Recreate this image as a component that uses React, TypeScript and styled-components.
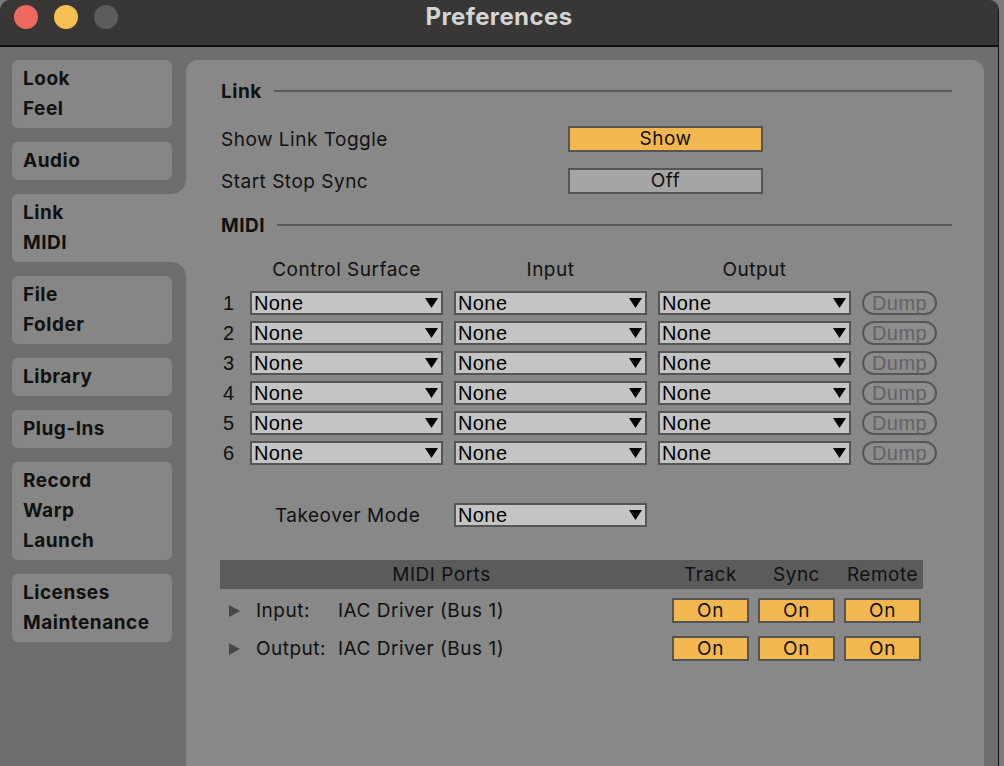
import React from 'react';
import styled, { createGlobalStyle, css } from 'styled-components';

const Global = createGlobalStyle`
  html, body { margin: 0; padding: 0; background: #7a7a7a; }
  body {
    width: 1004px; height: 766px; overflow: hidden;
    font-family: Inter, "Noto Sans", sans-serif;
    color: #111;
  }
  * { box-sizing: border-box; }
`;

const PANEL = '#888888';
const SIDEBAR = '#6e6e6e';
const ORANGE = '#f3b74f';
const BORDER = '#555555';

const uiText = css`
  font-family: Inter, "Noto Sans", sans-serif;
  font-size: 19px;
  letter-spacing: 0.5px;
`;

const monoText = css`
  font-family: "Liberation Sans", Arial, sans-serif;
  font-size: 20px;
  letter-spacing: 0.4px;
`;

const Screen = styled.div`
  display: flex;
  width: 1004px;
  height: 766px;
`;

const Window = styled.div`
  width: 999px;
  display: flex;
  flex-direction: column;
  border-right: 1px solid #111;
  border-radius: 10px 10px 0 0;
  overflow: hidden;
  background: ${SIDEBAR};
`;

const BehindStrip = styled.div`
  flex: 1;
  background: #7b7b7b;
`;

const TitleBar = styled.div`
  height: 47px;
  padding-top: 5px;
  display: grid;
  grid-template-columns: 1fr auto 1fr;
  align-items: start;
  background: #383735;
  border-bottom: 2px solid #111;
`;

const Lights = styled.div`
  display: flex;
  gap: 16px;
  padding-left: 14px;
`;

const Light = styled.span<{ $color: string }>`
  width: 24px;
  height: 24px;
  border-radius: 50%;
  background: ${(p) => p.$color};
`;

const Title = styled.div`
  font-weight: 700;
  font-size: 24px;
  letter-spacing: 0.4px;
  line-height: 24px;
  color: #d4d4d4;
`;

const Body = styled.div`
  flex: 1;
  display: flex;
  padding-top: 13px;
`;

const Sidebar = styled.nav`
  width: 186px;
  flex-shrink: 0;
  display: flex;
  flex-direction: column;
  align-items: flex-start;
  gap: 14px;
  padding-left: 12px;
`;

const NavItem = styled.div<{ $selected?: boolean }>`
  position: relative;
  width: 160px;
  padding: 4px 11px;
  border-radius: 6px;
  background: #868686;
  ${uiText};
  font-weight: 700;
  line-height: 30px;
  color: #111;
  ${(p) =>
    p.$selected &&
    css`
      width: 174px;
      background: ${PANEL};
      border-radius: 6px 0 0 6px;
      &::before,
      &::after {
        content: '';
        position: absolute;
        right: 0;
        width: 14px;
        height: 14px;
      }
      &::before {
        top: -14px;
        background: radial-gradient(circle at 0 0, transparent 13.5px, ${PANEL} 14px);
      }
      &::after {
        bottom: -14px;
        background: radial-gradient(circle at 0 100%, transparent 13.5px, ${PANEL} 14px);
      }
    `}
`;

const NavLine = styled.div``;

const Panel = styled.main`
  flex: 1;
  margin-right: 14px;
  background: ${PANEL};
  border-radius: 12px 12px 0 0;
  padding: 20px 32px 0 35px;
  display: flex;
  flex-direction: column;
`;

const Heading = styled.div<{ $top?: number }>`
  display: flex;
  align-items: center;
  gap: 12px;
  height: 22px;
  margin-top: ${(p) => p.$top ?? 0}px;
  ${uiText};
  font-weight: 700;
  &::after {
    content: '';
    flex: 1;
    height: 2px;
    background: #5a5a5a;
  }
`;

const SettingRow = styled.div<{ $top: number }>`
  display: flex;
  align-items: center;
  height: 26px;
  margin-top: ${(p) => p.$top}px;
  ${uiText};
`;

const SettingLabel = styled.span`
  width: 347px;
`;

const ToggleButton = styled.div<{ $on?: boolean }>`
  width: 195px;
  height: 26px;
  border: 2px solid ${BORDER};
  background: ${(p) => (p.$on ? ORANGE : '#a5a5a5')};
  ${uiText};
  line-height: 22px;
  text-align: center;
`;

const midiColumns = css`
  display: grid;
  grid-template-columns: 18px 193px 193px 193px 75px;
  column-gap: 11px;
`;

const ColumnHeaders = styled.div`
  ${midiColumns};
  height: 22px;
  margin-top: 22px;
  margin-bottom: 11px;
  align-items: center;
  ${uiText};
`;

const ColumnHeader = styled.div<{ $col: number }>`
  grid-column: ${(p) => p.$col};
  text-align: center;
`;

const MidiGrid = styled.div`
  ${midiColumns};
  row-gap: 6px;
  grid-auto-rows: 24px;
  align-items: center;
`;

const RowNumber = styled.div`
  padding-left: 2px;
  ${monoText};
`;

const Dropdown = styled.div<{ $col?: number }>`
  ${(p) => p.$col && css`grid-column: ${p.$col};`}
  height: 24px;
  border: 2px solid ${BORDER};
  background: #c4c4c4;
  display: flex;
  align-items: center;
  justify-content: space-between;
  padding: 0 3px 0 2px;
  ${monoText};
  color: #000;
`;

const DumpPill = styled.div`
  height: 24px;
  border: 2px solid #575757;
  border-radius: 12px;
  background: #8d8d8d;
  color: #636363;
  ${monoText};
  line-height: 20px;
  text-align: center;
`;

const TakeoverRow = styled.div`
  ${midiColumns};
  margin-top: 38px;
  height: 24px;
  align-items: center;
`;

const TakeoverLabel = styled.div`
  grid-column: 1 / 3;
  padding-left: 54px;
  ${uiText};
`;

const portColumns = css`
  display: grid;
  grid-template-columns: 443px 77px 77px 77px;
  column-gap: 9px;
  align-items: center;
`;

const PortsHeader = styled.div`
  ${portColumns};
  width: 703px;
  height: 29px;
  margin-top: 33px;
  margin-left: -1px;
  background: #5b5b5b;
  ${uiText};
  text-align: center;
`;

const PortsList = styled.div`
  display: flex;
  flex-direction: column;
  gap: 13px;
  margin-top: 9px;
  margin-left: -1px;
`;

const PortRow = styled.div`
  ${portColumns};
  height: 25px;
`;

const PortName = styled.div`
  display: flex;
  align-items: center;
  padding-left: 9px;
  ${uiText};
`;

const PortLabel = styled.span`
  min-width: 76px;
  margin-left: 16px;
  margin-right: 6px;
`;

const OnButton = styled.div`
  height: 25px;
  border: 2px solid ${BORDER};
  background: ${ORANGE};
  ${uiText};
  line-height: 21px;
  text-align: center;
`;

const Arrow = () => (
  <svg width="13" height="10" viewBox="0 0 13 10">
    <polygon points="0,0 13,0 6.5,10" fill="#000" />
  </svg>
);

const Disclosure = () => (
  <svg width="11" height="12" viewBox="0 0 11 12">
    <polygon points="0,0 11,6 0,12" fill="#474747" />
  </svg>
);

const Select = ({ col }: { col?: number }) => (
  <Dropdown $col={col}>
    <span>None</span>
    <Arrow />
  </Dropdown>
);

const navItems: { lines: string[]; selected?: boolean }[] = [
  { lines: ['Look', 'Feel'] },
  { lines: ['Audio'] },
  { lines: ['Link', 'MIDI'], selected: true },
  { lines: ['File', 'Folder'] },
  { lines: ['Library'] },
  { lines: ['Plug-Ins'] },
  { lines: ['Record', 'Warp', 'Launch'] },
  { lines: ['Licenses', 'Maintenance'] },
];

const ports = [
  { label: 'Input:', name: 'IAC Driver (Bus 1)' },
  { label: 'Output:', name: 'IAC Driver (Bus 1)' },
];

export default function App() {
  return (
    <>
      <Global />
      <Screen>
        <Window>
          <TitleBar>
            <Lights>
              <Light $color="#ee6a5f" />
              <Light $color="#f5c04f" />
              <Light $color="#5c5c5c" />
            </Lights>
            <Title>Preferences</Title>
          </TitleBar>
          <Body>
            <Sidebar>
              {navItems.map((item) => (
                <NavItem key={item.lines.join('-')} $selected={item.selected}>
                  {item.lines.map((l) => (
                    <NavLine key={l}>{l}</NavLine>
                  ))}
                </NavItem>
              ))}
            </Sidebar>
            <Panel>
              <Heading>Link</Heading>
              <SettingRow $top={24}>
                <SettingLabel>Show Link Toggle</SettingLabel>
                <ToggleButton $on>Show</ToggleButton>
              </SettingRow>
              <SettingRow $top={16}>
                <SettingLabel>Start Stop Sync</SettingLabel>
                <ToggleButton>Off</ToggleButton>
              </SettingRow>
              <Heading $top={20}>MIDI</Heading>
              <ColumnHeaders>
                <ColumnHeader $col={2}>Control Surface</ColumnHeader>
                <ColumnHeader $col={3}>Input</ColumnHeader>
                <ColumnHeader $col={4}>Output</ColumnHeader>
              </ColumnHeaders>
              <MidiGrid>
                {[1, 2, 3, 4, 5, 6].map((n) => (
                  <React.Fragment key={n}>
                    <RowNumber>{n}</RowNumber>
                    <Select />
                    <Select />
                    <Select />
                    <DumpPill>Dump</DumpPill>
                  </React.Fragment>
                ))}
              </MidiGrid>
              <TakeoverRow>
                <TakeoverLabel>Takeover Mode</TakeoverLabel>
                <Select col={3} />
              </TakeoverRow>
              <PortsHeader>
                <span>MIDI Ports</span>
                <span>Track</span>
                <span>Sync</span>
                <span>Remote</span>
              </PortsHeader>
              <PortsList>
                {ports.map((p) => (
                  <PortRow key={p.label}>
                    <PortName>
                      <Disclosure />
                      <PortLabel>{p.label}</PortLabel>
                      <span>{p.name}</span>
                    </PortName>
                    <OnButton>On</OnButton>
                    <OnButton>On</OnButton>
                    <OnButton>On</OnButton>
                  </PortRow>
                ))}
              </PortsList>
            </Panel>
          </Body>
        </Window>
        <BehindStrip />
      </Screen>
    </>
  );
}
